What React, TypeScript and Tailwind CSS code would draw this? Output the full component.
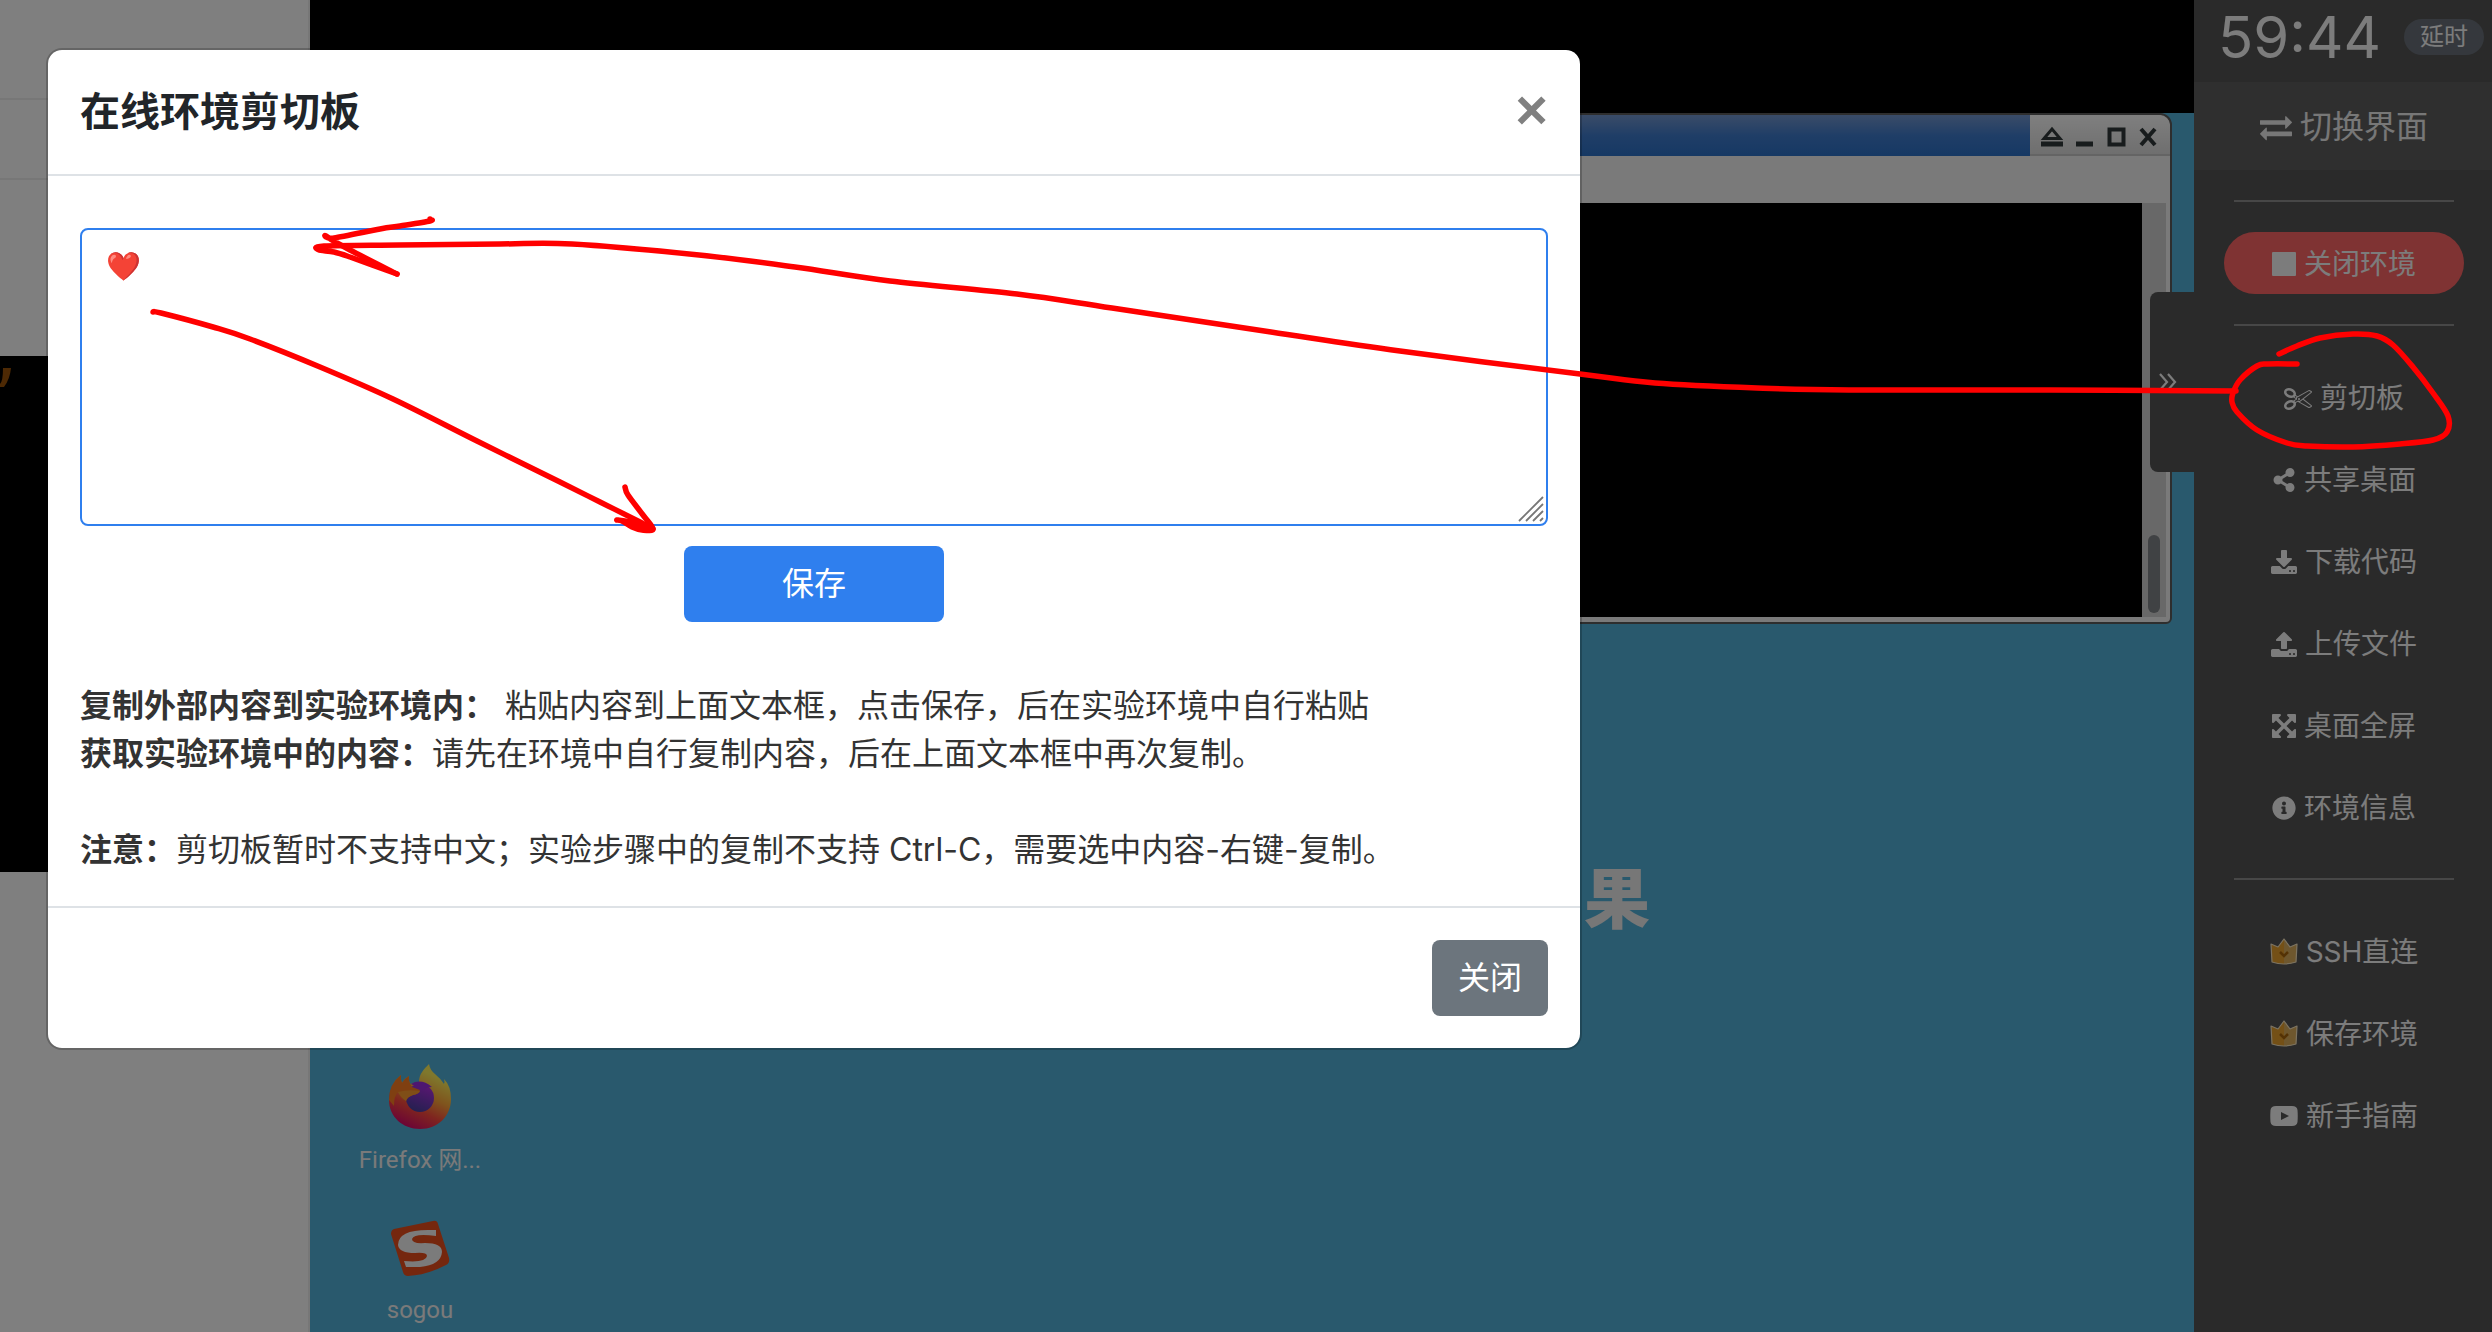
import { useState } from "react";
import type { ReactNode } from "react";
import { FaInfoCircle, FaShareAlt } from "react-icons/fa";

type IconProps = {
  d: string;
  viewBox: string;
  className?: string;
};

type MenuItem = {
  label: string;
  icon: ReactNode;
};

type Point = [number, number];

const PATHS = {
  exchange:
    "M1792 1184v192q0 13-9.5 22.5t-22.5 9.5h-1376v192q0 13-9.5 22.5t-22.5 9.5q-12 0-24-10l-319-320q-9-9-9-22 0-14 9-23l320-320q9-9 23-9 13 0 22.5 9.5t9.5 22.5v192h1376q13 0 22.5 9.5t9.5 22.5zm0-544q0 14-9 23l-320 320q-9 9-23 9-13 0-22.5-9.5t-9.5-22.5v-192h-1376q-13 0-22.5-9.5t-9.5-22.5v-192q0-13 9.5-22.5t22.5-9.5h1376v-192q0-14 9-23t23-9q12 0 24 10l319 319q9 9 9 23z",
  scissors:
    "M960 896q26 0 45 19t19 45-19 45-45 19-45-19-19-45 19-45 45-19zm300 64l507 398q28 20 25 56-5 35-35 51l-128 64q-13 7-29 7-17 0-31-8l-690-387-110 66q-8 4-12 5 14 49 10 97-7 77-56 147.5t-132 123.5q-132 84-277 84-136 0-222-78-90-84-79-207 7-76 56-147t131-124q132-84 278-84 83 0 151 31 9-13 22-22l122-73-122-73q-13-9-22-22-68 31-151 31-146 0-278-84-82-53-131-124t-56-147q-5-59 15.5-113t63.5-93q85-79 222-79 145 0 277 84 83 52 132 123t56 148q4 48-10 97 4 1 12 5l110 66 690-387q14-8 31-8 16 0 29 7l128 64q30 16 35 51 3 36-25 56zm-681-260q46-42 21-108t-106-117q-92-59-192-59-74 0-113 36-46 42-21 108t106 117q92 59 192 59 74 0 113-36zm-85 745q81-51 106-117t-21-108q-39-36-113-36-100 0-192 59-81 51-106 117t21 108q39 36 113 36 100 0 192-59zm178-613l96 58v-11q0-36 33-56l14-8-79-44-26 26q-3 3-10 11t-12 12q-2 2-4 3.5t-3 2.5zm224 224l96 32 736-576-128-64-768 431v113l-160 96 9 8q2 2 7 6 4 4 11 12t11 12l26 26zm704 416l128-64-520-408-177 138q-2 3-13 7z",
  download:
    "M1280 1344q0-26-19-45t-45-19-45 19-19 45 19 45 45 19 45-19 19-45zm256 0q0-26-19-45t-45-19-45 19-19 45 19 45 45 19 45-19 19-45zm128-224v320q0 40-28 68t-68 28h-1472q-40 0-68-28t-28-68v-320q0-40 28-68t68-28h465l135 136q58 56 136 56t136-56l136-136h464q40 0 68 28t28 68zm-325-569q17 41-14 70l-448 448q-18 19-45 19t-45-19l-448-448q-31-29-14-70 17-39 59-39h256v-448q0-26 19-45t45-19h256q26 0 45 19t19 45v448h256q42 0 59 39z",
  upload:
    "M1280 1472q0-26-19-45t-45-19-45 19-19 45 19 45 45 19 45-19 19-45zm256 0q0-26-19-45t-45-19-45 19-19 45 19 45 45 19 45-19 19-45zm128-224v320q0 40-28 68t-68 28h-1472q-40 0-68-28t-28-68v-320q0-40 28-68t68-28h427q21 56 70.5 92t110.5 36h256q61 0 110.5-36t70.5-92h427q40 0 68 28t28 68zm-325-648q-17 40-59 40h-256v448q0 26-19 45t-45 19h-256q-26 0-45-19t-19-45v-448h-256q-42 0-59-40-17-39 14-69l448-448q18-19 45-19t45 19l448 448q31 30 14 69z",
  arrows:
    "M1411 541l-355 355 355 355 144-144q29-31 70-14 39 17 39 59v448q0 26-19 45t-45 19h-448q-42 0-59-40-17-39 14-69l144-144-355-355-355 355 144 144q31 30 14 69-17 40-59 40h-448q-26 0-45-19t-19-45v-448q0-42 40-59 39-17 69 14l144 144 355-355-355-355-144 144q-19 19-45 19-12 0-24-5-40-17-40-59v-448q0-26 19-45t45-19h448q42 0 59 40 17 39-14 69l-144 144 355 355 355-355-144-144q-31-30-14-69 17-40 59-40h448q26 0 45 19t19 45v448q0 42-39 59-13 5-25 5-26 0-45-19z",
  youtube:
    "M6 0h16q5 0 5.500 4q.5 6 0 12q-.5 4-5.500 4h-16q-5 0-5.500-4q-.5-6 0-12q.5-4 5.500-4zM11 6v8l8-4z",
};

const PathIcon = ({ d, viewBox, className = "size-6" }: IconProps) => (
  <svg className={className} viewBox={viewBox} fill="currentColor" fillRule="evenodd" aria-hidden="true">
    <path d={d} />
  </svg>
);

const CrownIcon = () => (
  <svg className="h-7 w-7" viewBox="0 0 28 28" aria-hidden="true">
    <path d="M1 6l7 3 6-8 6 8 7-3-1 18q-12 4-24 0z" fill="#e8a02c" />
    <path d="M14 1l6 8 7-3-1 18q-6 2-12 2z" fill="#dcae5c" />
    <path d="M1 6l7 3 6-8 6 8 7-3-1 18q-12 4-24 0z" fill="none" stroke="#f6e6c4" strokeWidth="1.200" strokeLinejoin="round" />
    <path d="M10 14l4 4 4-4" fill="none" stroke="#a8650a" strokeWidth="2.500" />
  </svg>
);

const tools: MenuItem[] = [
  { label: "剪切板", icon: <PathIcon d={PATHS.scissors} viewBox="0 0 1792 1792" className="size-7" /> },
  { label: "共享桌面", icon: <FaShareAlt className="size-6" /> },
  { label: "下载代码", icon: <PathIcon d={PATHS.download} viewBox="0 0 1664 1536" className="h-6 w-[26px]" /> },
  { label: "上传文件", icon: <PathIcon d={PATHS.upload} viewBox="0 64 1664 1600" className="h-[25px] w-[26px]" /> },
  { label: "桌面全屏", icon: <PathIcon d={PATHS.arrows} viewBox="128 128 1536 1536" /> },
  { label: "环境信息", icon: <FaInfoCircle className="size-6" /> },
];

const extras: MenuItem[] = [
  { label: "SSH直连", icon: <CrownIcon /> },
  { label: "保存环境", icon: <CrownIcon /> },
  { label: "新手指南", icon: <PathIcon d={PATHS.youtube} viewBox="0 0 28 20" className="h-5 w-7" /> },
];

const Menu = ({ items }: { items: MenuItem[] }) => (
  <ul className="my-[30px]">
    {items.map((item) => (
      <li key={item.label}>
        <button type="button" className="flex h-[82px] w-full items-center justify-center gap-2 pt-0.5">
          {item.icon}
          <span>{item.label}</span>
        </button>
      </li>
    ))}
  </ul>
);

const Divider = () => <hr className="mx-auto w-[220px] border-0 border-t-2 border-[#8e8e8e]" />;

const Sidebar = () => (
  <aside className="relative w-[298px] shrink-0 bg-[#545454] text-[28px] leading-10 text-[#f8f8f8]">
    <div className="flex h-[82px] items-center justify-between pr-2 pb-2 pl-6">
      <time className="text-[58px] leading-[74px]">59:44</time>
      <button type="button" className="h-9 w-20 rounded-full bg-[#6a717a] text-2xl leading-9">
        延时
      </button>
    </div>
    <button
      type="button"
      className="flex h-[88px] w-full items-center justify-center gap-2 bg-[#5f5f5f] pt-0.5 pl-0.5 text-[32px] text-[#eeeeee]"
    >
      <PathIcon d={PATHS.exchange} viewBox="0 0 1792 1792" className="size-8" />
      <span>切换界面</span>
    </button>
    <div className="py-[30px] pl-0.5">
      <Divider />
      <button
        type="button"
        className="mx-auto my-[30px] flex h-[62px] w-60 items-center justify-center gap-2 rounded-full bg-[#ff6666] pt-0.5"
      >
        <span className="size-6 rounded-[1px] bg-[#f8f8f8]" />
        <span>关闭环境</span>
      </button>
      <Divider />
      <Menu items={tools} />
      <Divider />
      <Menu items={extras} />
    </div>
    <button
      type="button"
      aria-label="收起侧栏"
      className="absolute top-[292px] right-full flex h-[180px] w-11 items-center rounded-l-lg bg-[#545454] pl-2"
    >
      <svg className="h-5 w-5" viewBox="0 0 20 20" fill="none" stroke="currentColor" strokeWidth="2.200" aria-hidden="true">
        <path d="M2 2l7 8-7 8M10 2l7 8-7 8" />
      </svg>
    </button>
  </aside>
);

const FirefoxIcon = () => (
  <svg className="size-[66px]" viewBox="0 0 64 66" aria-hidden="true">
    <defs>
      <linearGradient id="fox-body" x1="0.800" y1="0.050" x2="0.350" y2="1">
        <stop offset="0.150" stopColor="#fff05a" />
        <stop offset="0.450" stopColor="#ffa83a" />
        <stop offset="0.700" stopColor="#ff4a3e" />
        <stop offset="1" stopColor="#d8086c" />
      </linearGradient>
      <linearGradient id="fox-globe" x1="0.700" y1="0" x2="0.300" y2="1">
        <stop offset="0" stopColor="#b42ee6" />
        <stop offset="1" stopColor="#46409e" />
      </linearGradient>
    </defs>
    <path
      d="M41 0C36 5 31 10 31 18L22 20Q20 16 21 12Q17 14 14 19Q12 15 13 11Q1 20 1 36C1 53 15 65 32 65C50 65 63 52 63 35Q63 22 56 15Q57 18 56 20Q52 14 47 10Q42 6 41 0z"
      fill="url(#fox-body)"
    />
    <circle cx="32" cy="34" r="14" fill="url(#fox-globe)" />
    <path d="M23 20Q33 14 44 23Q39 23 37 25Q34 27 32 25z" fill="#9a2ee0" />
    <path d="M1 36Q1 20 13 11Q12 15 14 19Q17 14 21 12Q20 17 24 23L32 26Q31 30 25 31Q19 33 18 37Q12 33 10 28Q6 32 6 42z" fill="#ff7e22" />
    <path d="M10 28Q20 25 32 27Q31 30 25 31Q19 33 18 37Q12 33 10 28z" fill="#ff9c2e" />
  </svg>
);

const SogouIcon = () => (
  <svg className="h-14 w-[60px]" viewBox="0 0 60 56" aria-hidden="true">
    <path d="M4 9L43 1Q47 0 48 4L59 38Q60 43 56 45Q37 55 18 56Q14 56 13 52L1 14Q1 10 4 9z" fill="#ea4f1c" />
    <path
      d="M46 10V16Q24 13 22 19Q22 24 35 23Q52 23 52 32Q51 45 30 47H16L14 41Q36 43 37 36Q37 32 25 33Q9 33 8 25Q8 10 38 10z"
      fill="#f6f6f6"
    />
  </svg>
);

const Terminal = () => (
  <div className="absolute top-0 right-[22px] left-5 flex h-[511px] flex-col rounded-tr-xl rounded-br-md border-2 border-[#5c5c5c] bg-[#f4f4f4]">
    <div className="flex h-[41px] shrink-0">
      <div className="flex-1 bg-linear-to-b from-[#7498d0] via-[#3f7cce] to-[#2c72c8]" />
      <div className="flex w-[140px] items-center justify-center rounded-tr-xl border-b-2 border-[#c8c8c8] bg-linear-to-b from-[#ffffff] to-[#dedede] pt-1 text-[#30383a]">
        <svg className="h-6 w-full" viewBox="0 0 140 24" fill="none" stroke="currentColor" strokeWidth="3" aria-hidden="true">
          <path d="M14 13.500L22 4l8 9.500z" />
          <path d="M11 19h22" strokeWidth="5" />
          <path d="M46 19h17" strokeWidth="5" />
          <rect x="79.500" y="4.500" width="14" height="15" strokeWidth="4" />
          <path d="M111 4l14 16M125 4l-14 16" strokeWidth="4" />
        </svg>
      </div>
    </div>
    <div className="h-[47px] shrink-0" />
    <div className="mr-1 mb-[5px] flex flex-1 bg-[#d0d0d0]">
      <div className="flex-1 bg-black" />
      <div className="flex w-6 items-end justify-center pb-1">
        <div className="h-[78px] w-3 rounded-full bg-[#808488]" />
      </div>
    </div>
  </div>
);

const Desktop = () => (
  <main className="flex min-w-0 flex-1 flex-col">
    <div className="h-[113px] shrink-0 bg-black" />
    <div className="relative flex-1 overflow-hidden bg-[#52b2da] font-[Roboto,Noto_Sans_CJK_SC,sans-serif] text-2xl leading-7 text-[#f4f4f4] [text-shadow:2px_3px_4px_#000]">
      <Terminal />
      <div className="absolute top-[748px] right-[544px] text-[66px] leading-[80px] font-black text-[#eeeeee] [text-shadow:none]">
        果
      </div>
      <button type="button" className="absolute top-[951px] left-[30px] flex w-40 flex-col items-center gap-4">
        <FirefoxIcon />
        <span>Firefox 网...</span>
      </button>
      <button type="button" className="absolute top-[1107px] left-[30px] flex w-40 flex-col items-center gap-5">
        <SogouIcon />
        <span>sogou</span>
      </button>
    </div>
  </main>
);

const StepsPanel = () => (
  <section className="flex w-[310px] shrink-0 flex-col border-r-2 border-[#eeeeee] bg-white">
    <div className="h-[100px] border-b-2 border-[#eeeeee]" />
    <div className="h-20 border-b-2 border-[#eeeeee]" />
    <div className="mt-44 h-[516px] bg-black pt-2.5">
      <svg className="h-6 w-3" viewBox="0 0 12 24" aria-hidden="true">
        <path d="M3 2h8Q10 13 4 21H0V18Q3 15 3 2z" fill="#9a5208" />
      </svg>
    </div>
  </section>
);

const ClipboardDialog = () => {
  const [content, setContent] = useState("❤️");

  return (
    <div className="absolute inset-0 flex items-start bg-black/50">
      <div
        role="dialog"
        aria-labelledby="clipboard-title"
        className="mt-12 ml-[46px] w-full max-w-[1536px] rounded-2xl border-2 border-black/20 bg-white bg-clip-padding text-[32px] leading-[48px] text-[#333333]"
      >
        <header className="flex items-start justify-between border-b-2 border-[#dee2e6] p-8">
          <h5 id="clipboard-title" className="text-[40px] leading-[60px] font-bold text-[#212529]">
            在线环境剪切板
          </h5>
          <button
            type="button"
            aria-label="关闭"
            className="font-[Liberation_Sans] text-[56px] leading-[56px] font-bold text-[#808080]"
          >
            ×
          </button>
        </header>
        <div className="p-8">
          <div className="relative mt-5">
            <textarea
              aria-label="剪切板内容"
              value={content}
              onChange={(e) => setContent(e.target.value)}
              className="block h-[298px] w-full resize-none rounded-lg border-2 border-[#2f7fee] px-6 py-3 text-[28px] outline-none"
            />
            <svg
              className="pointer-events-none absolute right-1 bottom-1 size-[26px]"
              viewBox="0 0 26 26"
              stroke="#777777"
              strokeWidth="1.800"
              aria-hidden="true"
            >
              <path d="M1 25L25 1M8 25L25 8M15 25L25 15M22 25L25 22" />
            </svg>
          </div>
          <button
            type="button"
            className="mx-auto mt-5 block h-[76px] w-[260px] rounded-lg bg-[#2f7fee] text-white"
          >
            保存
          </button>
          <div className="mt-[60px]">
            <p>
              <b>复制外部内容到实验环境内：</b> 粘贴内容到上面文本框，点击保存，后在实验环境中自行粘贴
            </p>
            <p>
              <b>获取实验环境中的内容：</b>请先在环境中自行复制内容，后在上面文本框中再次复制。
            </p>
            <p className="mt-12">
              <b>注意：</b>剪切板暂时不支持中文；实验步骤中的复制不支持 Ctrl-C，需要选中内容-右键-复制。
            </p>
          </div>
        </div>
        <footer className="flex justify-end border-t-2 border-[#dee2e6] p-8">
          <button type="button" className="h-[76px] w-[116px] rounded-lg bg-[#6c757d] text-white">
            关闭
          </button>
        </footer>
      </div>
    </div>
  );
};

// pen strokes, as the points the pen went through
const strokes: Point[][] = [
  [[2279, 354], [2297, 346], [2320, 338], [2353, 334], [2377, 336], [2393, 345], [2413, 367], [2433, 393], [2448, 416], [2447, 432], [2433, 440], [2400, 444], [2353, 447], [2307, 446], [2287, 443], [2257, 430], [2237, 412], [2232, 402], [2233, 393], [2240, 380], [2257, 366], [2268, 364], [2297, 364]],
  [[2236, 391], [2050, 390], [1849, 390], [1757, 388], [1655, 383], [1580, 374], [1400, 351], [1271, 332], [1112, 308], [1017, 294], [890, 281], [795, 267], [699, 255], [572, 244], [500, 244], [400, 245], [324, 246], [319, 250], [334, 252], [350, 257], [397, 274]],
  [[430, 219], [430, 221], [400, 226], [380, 229], [334, 238], [326, 236], [350, 250], [397, 274]],
  [[153, 312], [161, 313], [213, 327], [250, 339], [320, 367], [393, 399], [477, 441], [560, 482], [600, 502], [640, 522], [653, 529]],
  [[625, 487], [628, 495], [643, 515], [653, 529], [642, 530], [632, 527], [622, 521], [617, 520], [630, 522], [648, 527]],
];

// smooth curve through all the points of a stroke
const toPath = (points: Point[]) => {
  let d = `M${points[0][0]} ${points[0][1]}`;
  for (let i = 0; i < points.length - 1; i++) {
    const p0 = points[i - 1] ?? points[i];
    const p1 = points[i];
    const p2 = points[i + 1];
    const p3 = points[i + 2] ?? p2;
    d += `C${p1[0] + (p2[0] - p0[0]) / 6} ${p1[1] + (p2[1] - p0[1]) / 6} `;
    d += `${p2[0] - (p3[0] - p1[0]) / 6} ${p2[1] - (p3[1] - p1[1]) / 6} ${p2[0]} ${p2[1]}`;
  }
  return d;
};

const PenMarks = () => (
  <svg
    className="pointer-events-none absolute inset-0 size-full"
    viewBox="0 0 2492 1332"
    fill="none"
    stroke="#ff0000"
    strokeWidth="5.500"
    strokeLinecap="round"
    strokeLinejoin="round"
    aria-hidden="true"
  >
    {strokes.map((points, i) => (
      <path key={i} d={toPath(points)} />
    ))}
  </svg>
);

const App = () => {
  return (
    <div className="relative flex h-screen overflow-hidden font-[Inter,Noto_Sans_CJK_SC,sans-serif]">
      <StepsPanel />
      <Desktop />
      <Sidebar />
      <ClipboardDialog />
      <PenMarks />
    </div>
  );
};

export default App;
